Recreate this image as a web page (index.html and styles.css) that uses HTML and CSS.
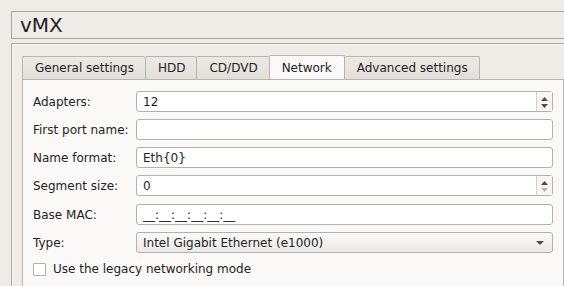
FILE: index.html
```html
<!DOCTYPE html>
<html lang="en">
<head>
  <meta charset="UTF-8">
  <title>vMX</title>
  <meta name="viewport" content="width=device-width,initial-scale=1">
  <link rel="stylesheet" href="styles.css">
</head>
<body>
  <div class="window">
    <div class="title">vMX</div>
    <div class="group">
      <div class="tabs">
        <div class="tab">General settings</div>
        <div class="tab">HDD</div>
        <div class="tab">CD/DVD</div>
        <div class="tab active">Network</div>
        <div class="tab">Advanced settings</div>
      </div>
      <div class="panel">
        <div class="form">
          <label>Adapters:</label>
          <div class="field spin">
            <span class="value">12</span>
            <span class="arrows">
              <svg width="9" height="16" viewBox="0 0 9 16"><path d="M1 7 L4.5 3 L8 7 Z" fill="#4d4d4d"/><path d="M1 10 L4.5 14 L8 10 Z" fill="#4d4d4d"/></svg>
            </span>
          </div>

          <label>First port name:</label>
          <div class="field"><span class="value"></span></div>

          <label>Name format:</label>
          <div class="field"><span class="value">Eth{0}</span></div>

          <label>Segment size:</label>
          <div class="field spin">
            <span class="value">0</span>
            <span class="arrows">
              <svg width="9" height="16" viewBox="0 0 9 16"><path d="M1 7 L4.5 3 L8 7 Z" fill="#4d4d4d"/><path d="M1 10 L4.5 14 L8 10 Z" fill="#b5b3b0"/></svg>
            </span>
          </div>

          <label class="mac">Base MAC:</label>
          <div class="field mac"><span class="value">__:__:__:__:__:__</span></div>

          <label>Type:</label>
          <div class="field combo">
            <span class="value">Intel Gigabit Ethernet (e1000)</span>
            <svg class="drop" width="10" height="6" viewBox="0 0 10 6"><path d="M1 1 L9 1 L5 5 Z" fill="#4d4d4d"/></svg>
          </div>
        </div>
        <div class="check">
          <span class="box"></span>
          <span>Use the legacy networking mode</span>
        </div>
      </div>
    </div>
  </div>
</body>
</html>
```

FILE: styles.css
```css
*{margin:0;padding:0;box-sizing:border-box}
body{font-family:"DejaVu Sans",sans-serif;font-size:12px;color:#232323;background:#efebe7;overflow:hidden;width:564px;height:286px}
.window{width:586px;height:286px;padding:11px 0 0 11px;display:flex;flex-direction:column;gap:4px;overflow:hidden}
.title{height:28px;border:1px solid #a9a6a2;font-size:20px;line-height:26px;padding-left:8px;background:#efebe7}
.group{border:1px solid #a9a6a2;border-right:none;border-bottom:none;box-shadow:inset 1px 1px 0 #fbf9f7;padding:11px 11px 0 10px;height:243px}
.tabs{display:flex;align-items:flex-end;height:24px}
.tab{height:23px;line-height:23px;padding:0 11px 0 12px;background:linear-gradient(#ece9e5,#e3e0dc);border:1px solid #b8b5b1;border-bottom:none;border-right:none;border-radius:2px 2px 0 0}
.tab:last-child{border-right:1px solid #b8b5b1}
.tab.active{height:24px;line-height:24px;background:#fbf9f7;border-right:1px solid #b8b5b1;padding:0 12px}
.tab.active + .tab{border-left:none}
.panel{width:542px;height:207px;background:#fbf9f7;border:1px solid #b8b5b1;border-bottom:none;padding:11px 10px 0 10px}
.form{display:grid;grid-template-columns:103px 417px;row-gap:7px;align-items:center}
.form label{height:21px;line-height:23px}
.form .mac{margin-top:1px}
.field{height:21px;background:#fff;border:1px solid #b4b1ad;border-radius:3px;display:flex;align-items:center;padding-left:6px}
.field .value{flex:1;height:19px;line-height:21px}
.spin .arrows{width:16px;height:19px;border-left:1px solid #d4d1cd;display:flex;align-items:center;justify-content:center;background:#f7f6f5}
.combo{background:linear-gradient(#fafaf9,#ebe9e6);padding-right:6px}
.combo .drop{margin-right:1px}
.check{display:flex;align-items:center;gap:7px;margin-top:9px;line-height:14px}
.check .box{width:13px;height:13px;border:1px solid #b4b1ad;background:#fff;border-radius:1px}
```
